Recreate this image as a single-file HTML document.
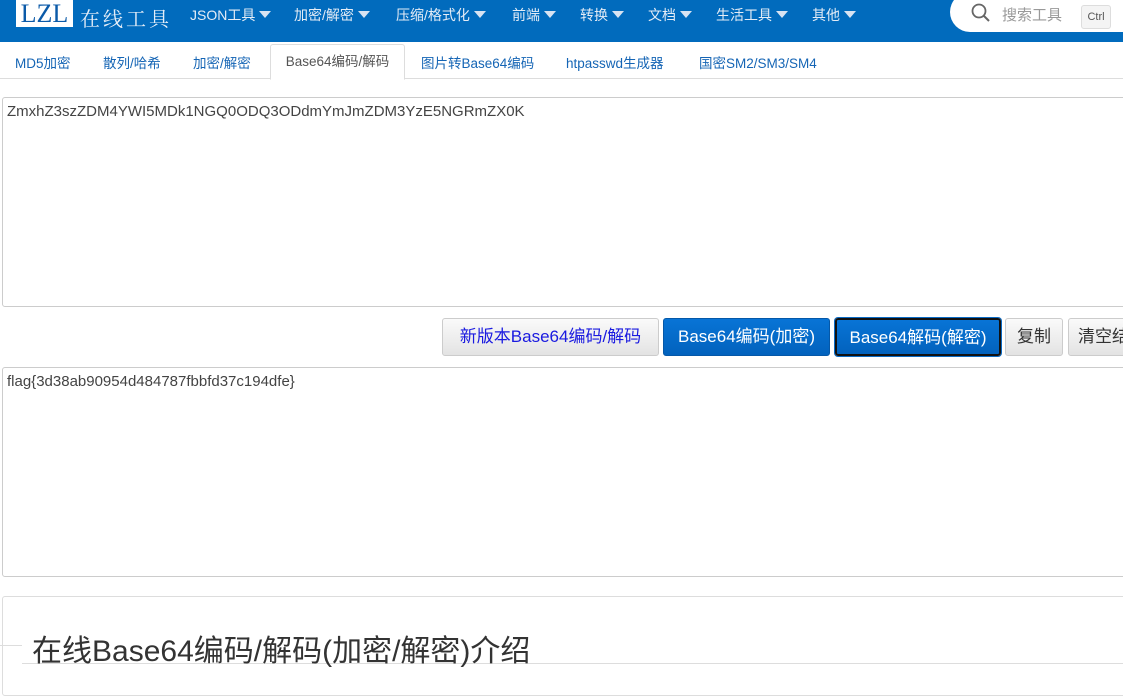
<!DOCTYPE html>
<html><head><meta charset="utf-8"><style>
*{margin:0;padding:0;box-sizing:border-box}
body{width:1123px;height:682px;overflow:hidden;background:#fff;font-family:"Liberation Sans","Noto Sans CJK SC",sans-serif;position:relative}
.hd{position:absolute;left:0;top:0;width:1123px;height:42px;background:#016bbd}
.logo{position:absolute;left:16px;top:0;width:57px;height:27px;background:#fff;color:#0b5aa8;font:26px "Liberation Serif","Noto Serif CJK SC",serif;line-height:28px;text-align:center}
.lt{position:absolute;left:80px;top:3px;color:#e6eef8;font:20px "Noto Serif CJK SC",serif;letter-spacing:3px}
.nav{position:absolute;top:5px;color:#e4ecf6;font-size:14px}
.nav:after{content:"";display:inline-block;margin-left:4px;border-left:6px solid transparent;border-right:6px solid transparent;border-top:7px solid #d7e3f2;vertical-align:2px}
.sr{position:absolute;left:950px;top:-8px;width:200px;height:40px;background:#fff;border-radius:20px}
.sr .t{position:absolute;left:52px;top:12px;color:#999;font-size:15px}
.sr .k{position:absolute;left:131px;top:13px;width:30px;height:24px;border:1px solid #ddd;border-radius:3px;background:#f4f4f4;font-size:11px;color:#555;text-align:center;line-height:22px}
.tabs{position:absolute;top:42px;left:0;width:1123px;height:37px;border-bottom:1px solid #ddd}
.tab{position:absolute;top:10px;color:#1565b5;font-size:13.5px}
.act{position:absolute;left:270px;top:2px;width:135px;height:36px;border:1px solid #ddd;border-bottom:1px solid #fff;border-radius:3px 3px 0 0;background:#fff;color:#555;font-size:13.5px;text-align:center;line-height:34px}
.ta{position:absolute;left:2px;width:1130px;border:1px solid #ccc;border-radius:3px;padding:5px 4px;font-size:15px;color:#444}
.btn{position:absolute;top:318px;height:38px;border-radius:3px;font-size:17px;line-height:36px;text-align:center;font-family:"Liberation Sans","Noto Sans CJK SC",sans-serif}
.g{background:linear-gradient(#fafafa,#e3e3e3);border:1px solid #ccc;color:#333}
.b{background:linear-gradient(#0874d6,#0262bd);color:#fff;border:1px solid #0558a8}
.pn{position:absolute;left:2px;top:596px;width:1130px;height:100px;border:1px solid #ddd;border-radius:3px}
</style></head><body>
<div class="hd">
<div class="logo">LZL</div><div class="lt">在线工具</div>
<div class="nav" style="left:190px">JSON工具</div>
<div class="nav" style="left:294px">加密/解密</div>
<div class="nav" style="left:396px">压缩/格式化</div>
<div class="nav" style="left:512px">前端</div>
<div class="nav" style="left:580px">转换</div>
<div class="nav" style="left:648px">文档</div>
<div class="nav" style="left:716px">生活工具</div>
<div class="nav" style="left:812px">其他</div>
<div class="sr"><svg style="position:absolute;left:20px;top:10px" width="22" height="22" viewBox="0 0 22 22"><circle cx="9" cy="9" r="6.5" fill="none" stroke="#666" stroke-width="1.8"/><path d="M14 14l5 5" stroke="#666" stroke-width="2"/></svg><span class="t">搜索工具</span><span class="k">Ctrl</span></div>
</div>
<div class="tabs">
<span class="tab" style="left:15px">MD5加密</span>
<span class="tab" style="left:103px">散列/哈希</span>
<span class="tab" style="left:193px">加密/解密</span>
<div class="act">Base64编码/解码</div>
<span class="tab" style="left:421px">图片转Base64编码</span>
<span class="tab" style="left:566px">htpasswd生成器</span>
<span class="tab" style="left:699px">国密SM2/SM3/SM4</span>
</div>
<div class="ta" style="top:97px;height:210px">ZmxhZ3szZDM4YWI5MDk1NGQ0ODQ3ODdmYmJmZDM3YzE5NGRmZX0K</div>
<div class="btn g" style="left:442px;width:217px;color:#1a1ae0">新版本Base64编码/解码</div>
<div class="btn b" style="left:663px;width:167px">Base64编码(加密)</div>
<div class="btn b" style="left:835px;width:166px;border:2px solid #111;box-shadow:0 0 0 1px #0a6ac4">Base64解码(解密)</div>
<div class="btn g" style="left:1005px;width:58px">复制</div>
<div class="btn g" style="left:1068px;width:80px;text-align:left;padding-left:9px">清空结果</div>
<div class="ta" style="top:367px;height:210px">flag{3d38ab90954d484787fbbfd37c194dfe}</div>
<div class="pn"></div>
<div style="position:absolute;left:0;top:645px;width:22px;height:1px;background:#ddd"></div>
<div style="position:absolute;left:22px;top:663px;width:1101px;height:1px;background:#ddd"></div>
<div style="position:absolute;left:32px;top:626px;font-size:30px;color:#333">在线Base64编码/解码(加密/解密)介绍</div>
</body></html>
